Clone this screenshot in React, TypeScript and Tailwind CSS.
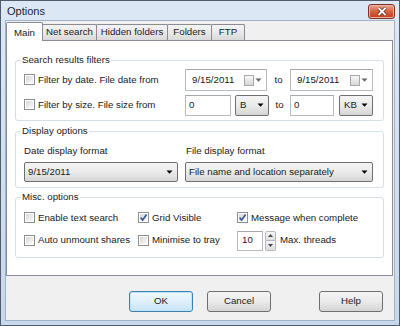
import React from "react";

const Arrow = ({ color = "#000" }: { color?: string }) => (
  <svg width="7" height="4" viewBox="0 0 7 4">
    <path d="M0.5 0.5h6L3.5 3.8z" fill={color} />
  </svg>
);

const CheckBox = ({ checked = false }: { checked?: boolean }) => (
  <div className="w-[11px] h-[11px] shrink-0 border border-[#8e8f8f] bg-white p-[1px]">
    <div className="w-full h-full bg-gradient-to-br from-[#d8d8d8] to-[#fbfbfb] relative">
      {checked && (
        <svg
          width="11"
          height="11"
          viewBox="0 0 11 11"
          className="absolute -left-[2px] -top-[2px]"
        >
          <path
            d="M2.6 5.4 L4.6 8 L8.6 2.4"
            fill="none"
            stroke="#3d5b94"
            strokeWidth="1.7"
          />
        </svg>
      )}
    </div>
  </div>
);

const Check = ({
  label,
  checked,
  className = "",
}: {
  label: string;
  checked?: boolean;
  className?: string;
}) => (
  <div className={"flex items-center gap-[3px] " + className}>
    <CheckBox checked={checked} />
    <span className="whitespace-nowrap">{label}</span>
  </div>
);

const DatePicker = ({ className = "" }: { className?: string }) => (
  <div
    className={
      "h-[22px] flex items-center justify-between bg-white border border-[#b7bbc2] border-t-[#a4a8b0] pl-[6px] pr-[4px] " +
      className
    }
  >
    <span>9/15/2011</span>
    <div className="flex items-center gap-[1px]">
      <div className="w-[10px] h-[11px] border border-[#a8a8a8] bg-gradient-to-b from-[#f8f8f8] to-[#d6d6d6]" />
      <Arrow color="#666" />
    </div>
  </div>
);

const SmallSelect = ({ text, className = "" }: { text: string; className?: string }) => (
  <div
    className={
      "h-[21px] flex items-center justify-between rounded-[2px] border border-[#707070] bg-gradient-to-b from-[#f4f4f4] via-[#ebebeb] to-[#d6d6d6] pl-[4px] pr-[4px] " +
      className
    }
  >
    <span>{text}</span>
    <Arrow />
  </div>
);

const Tab = ({
  label,
  w,
  active,
}: {
  label: string;
  w: string;
  active?: boolean;
}) =>
  active ? (
    <div
      className={
        "relative z-10 h-[19px] -mb-px flex items-start justify-center pt-[3px] bg-white border border-b-0 border-[#898c95] rounded-t-[2px] " +
        w
      }
    >
      {label}
    </div>
  ) : (
    <div
      className={
        "h-[16px] -ml-px flex items-center justify-center bg-gradient-to-b from-[#f3f3f3] via-[#e9e9e9] to-[#d9d9d9] border border-b-0 border-[#898c95] rounded-t-[2px] " +
        w
      }
    >
      {label}
    </div>
  );

const Button = ({
  label,
  primary,
  className = "",
}: {
  label: string;
  primary?: boolean;
  className?: string;
}) => (
  <div
    className={
      "w-[64px] h-[21px] flex items-center justify-center rounded-[3px] border " +
      (primary
        ? "border-[#3c7fb1] bg-gradient-to-b from-[#eef7fd] via-[#e0f0fb] to-[#c5e3f7] shadow-[inset_0_0_0_1px_#bfe3f8] "
        : "border-[#707070] bg-gradient-to-b from-[#f4f4f4] via-[#ebebeb] to-[#d4d4d4] ") +
      className
    }
  >
    {label}
  </div>
);

export default function App() {
  return (
    <div className="w-[400px] h-[326px] flex flex-col border border-[#4f5d6f] bg-gradient-to-b from-[#dce8f5] to-[#c6d8ec] font-['Liberation_Sans',Arial,sans-serif] text-[9.7px] text-[#1a1a1a] overflow-hidden">
      {/* Title bar */}
      <div className="h-[19px] shrink-0 flex justify-between">
        <span className="pl-[6px] pt-[3px] text-[11px] leading-[14px] text-[#1b2533]">
          Options
        </span>
        <div className="mt-[3px] mr-[4px] w-[27px] h-[15px] rounded-[3px] border border-[#7e3022] bg-gradient-to-b from-[#e9a898] via-[#d4603f] to-[#c23c1e] flex items-center justify-center shadow-[inset_0_0_0_1px_#efb3a4]">
          <svg width="10" height="9" viewBox="0 0 10 9">
            <path d="M1.5 1 L8.5 8 M8.5 1 L1.5 8" stroke="#5a1f14" strokeWidth="3.2" />
            <path d="M1.5 1 L8.5 8 M8.5 1 L1.5 8" stroke="#fff" strokeWidth="1.8" />
          </svg>
        </div>
      </div>

      {/* Client area */}
      <div className="flex-1 mx-[4px] flex flex-col bg-[#f0f0f0] border border-[#9fb3c9]">
        {/* Tabs */}
        <div className="h-[19px] flex items-end">
          <Tab label="Main" w="w-[37px]" active />
          <Tab label="Net search" w="w-[55px]" />
          <Tab label="Hidden folders" w="w-[72px]" />
          <Tab label="Folders" w="w-[45px]" />
          <Tab label="FTP" w="w-[34px]" />
        </div>

        {/* Tab panel */}
        <div className="mr-[1px] bg-white border border-[#898c95] px-[8px] pt-[12px] pb-[17px] flex flex-col">
          <fieldset className="border border-[#d5dfe5] rounded-[3px] px-[8px] pt-[2px] pb-[4px]">
            <legend className="-ml-[3px] px-[1px] leading-[14px]">Search results filters</legend>
            <div className="flex flex-col gap-[3px]">
              <div className="h-[22px] flex items-center">
                <Check label="Filter by date. File date from" className="w-[161px]" />
                <DatePicker className="w-[82px]" />
                <span className="w-[23px] text-center">to</span>
                <DatePicker className="w-[83px]" />
              </div>
              <div className="h-[22px] flex items-center">
                <Check label="Filter by size. File size from" className="w-[161px]" />
                <div className="w-[46px] h-[21px] bg-white border border-[#b7bbc2] border-t-[#a4a8b0] pl-[3px] flex items-center">
                  0
                </div>
                <SmallSelect text="B" className="w-[34px] ml-[4px]" />
                <span className="w-[21px] text-center">to</span>
                <div className="w-[44px] h-[21px] bg-white border border-[#b7bbc2] border-t-[#a4a8b0] pl-[3px] flex items-center">
                  0
                </div>
                <SmallSelect text="KB" className="w-[34px] ml-[5px]" />
              </div>
            </div>
          </fieldset>

          <fieldset className="mt-[3px] border border-[#d5dfe5] rounded-[3px] px-[8px] pt-[6px] pb-[5px]">
            <legend className="-ml-[3px] px-[1px] leading-[14px]">Display options</legend>
            <div className="flex gap-[7px]">
              <div className="w-[154px] flex flex-col">
                <span className="h-[14px] leading-[14px]">Date display format</span>
                <div className="mt-[4px] h-[20px] flex items-center justify-between rounded-[2px] border border-[#707070] bg-gradient-to-b from-[#f4f4f4] via-[#ebebeb] to-[#d6d6d6] pl-[3px] pr-[4px]">
                  <span>9/15/2011</span>
                  <Arrow />
                </div>
              </div>
              <div className="w-[188px] flex flex-col">
                <span className="h-[14px] leading-[14px] pl-[1px]">File display format</span>
                <div className="mt-[4px] h-[20px] flex items-center justify-between rounded-[2px] border border-[#707070] bg-gradient-to-b from-[#f4f4f4] via-[#ebebeb] to-[#d6d6d6] pl-[3px] pr-[4px]">
                  <span>File name and location separately</span>
                  <Arrow />
                </div>
              </div>
            </div>
          </fieldset>

          <fieldset className="mt-[2px] border border-[#d5dfe5] rounded-[3px] px-[8px] pt-[3px] pb-[6px]">
            <legend className="-ml-[3px] px-[1px] leading-[14px]">Misc. options</legend>
            <div className="flex flex-col gap-[1px]">
              <div className="h-[22px] flex items-center">
                <Check label="Enable text search" className="w-[114px]" />
                <Check label="Grid Visible" checked className="w-[99px]" />
                <Check label="Message when complete" checked />
              </div>
              <div className="h-[21px] flex items-center">
                <Check label="Auto unmount shares" className="w-[114px]" />
                <Check label="Minimise to tray" className="w-[99px]" />
                <div className="flex items-center">
                  <div className="w-[26px] h-[20px] bg-white border border-[#b7bbc2] border-t-[#a4a8b0] pl-[4px] flex items-center">
                    10
                  </div>
                  <div className="ml-[2px] w-[11px] h-[20px] flex flex-col">
                    <div className="flex-1 flex items-center justify-center border border-[#b5b8be] rounded-t-[2px] bg-gradient-to-b from-[#f5f5f5] to-[#dedede]">
                      <svg width="5" height="3" viewBox="0 0 5 3">
                        <path d="M0 3h5L2.5 0z" fill="#4a4a4a" />
                      </svg>
                    </div>
                    <div className="flex-1 flex items-center justify-center border border-t-0 border-[#b5b8be] rounded-b-[2px] bg-gradient-to-b from-[#f5f5f5] to-[#dedede]">
                      <svg width="5" height="3" viewBox="0 0 5 3">
                        <path d="M0 0h5L2.5 3z" fill="#4a4a4a" />
                      </svg>
                    </div>
                  </div>
                  <span className="ml-[4px]">Max. threads</span>
                </div>
              </div>
            </div>
          </fieldset>
        </div>

        {/* Buttons */}
        <div className="mt-[15px] flex">
          <Button label="OK" primary className="ml-[123px]" />
          <Button label="Cancel" className="ml-[14px]" />
          <Button label="Help" className="ml-[48px]" />
        </div>
      </div>

      {/* Bottom frame */}
      <div className="h-[4px] shrink-0" />
    </div>
  );
}
